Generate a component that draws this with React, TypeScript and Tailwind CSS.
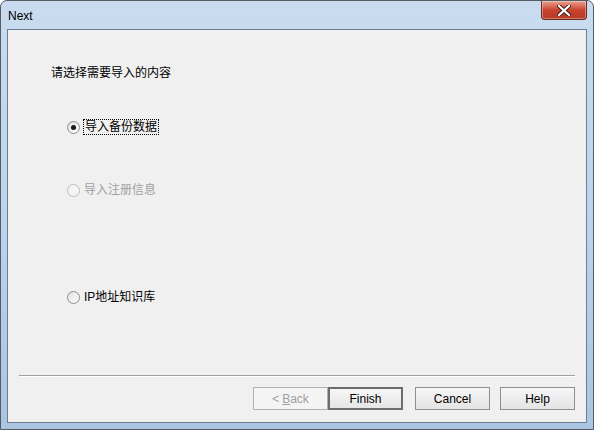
import React from 'react'

const font = { fontFamily: '"Liberation Sans", "Noto Sans CJK SC", sans-serif' }

function Radio({ checked, disabled }: { checked?: boolean; disabled?: boolean }) {
  return (
    <span
      className={
        'flex h-[13px] w-[13px] items-center justify-center rounded-full border ' +
        (disabled
          ? 'border-[#bcbcbc] bg-[#f4f4f4]'
          : 'border-[#8e8f8f] bg-gradient-to-br from-[#dcdcdc] to-[#ffffff]')
      }
    >
      <span
        className={
          'flex h-[9px] w-[9px] items-center justify-center rounded-full ' +
          (disabled ? 'bg-[#f4f4f4]' : 'bg-gradient-to-br from-[#e4e4e4] to-[#fbfbfb]')
        }
      >
        {checked && <span className="h-[5px] w-[5px] rounded-full bg-[#1a1a1a]" />}
      </span>
    </span>
  )
}

function Btn({
  children,
  isDefault,
  disabled,
}: {
  children: React.ReactNode
  isDefault?: boolean
  disabled?: boolean
}) {
  return (
    <div
      className={
        'flex h-[23px] w-[75px] items-center justify-center text-[12px] ' +
        (isDefault
          ? 'border-2 border-[#6d6d6d] bg-gradient-to-b from-[#f6f6f6] to-[#e6e6e6] text-black'
          : disabled
            ? 'border border-[#adb2b5] bg-[#f4f4f4] text-[#a0a0a0]'
            : 'border border-[#8f8f8f] bg-gradient-to-b from-[#f6f6f6] to-[#e4e4e4] text-black')
      }
    >
      {children}
    </div>
  )
}

export default function App() {
  return (
    <div
      className="h-[430px] w-[594px] overflow-hidden rounded-t-[7px] border border-[#555b63] bg-gradient-to-b from-[#c9dcef] via-[#bcd4ec] to-[#a9c5e2]"
      style={font}
    >
      {/* title bar */}
      <div className="flex h-[28px] items-start justify-between">
        <div className="pl-[7px] pt-[8px] text-[12px] leading-[14px] text-black">Next</div>
        <div className="mr-[6px] flex h-[19px] w-[46px] items-center justify-center rounded-b-[4px] border border-t-0 border-[#6b2a20] bg-gradient-to-b from-[#e8a090] via-[#c9432d] to-[#b33a26] shadow-[inset_0_0_0_1px_rgba(255,255,255,0.35)]">
          <svg width="14" height="11" viewBox="0 0 14 11">
            <path
              d="M2 1 L12 10 M12 1 L2 10"
              stroke="#3b1a14"
              strokeWidth="4"
              strokeLinecap="square"
            />
            <path
              d="M2 1 L12 10 M12 1 L2 10"
              stroke="#ffffff"
              strokeWidth="2.2"
              strokeLinecap="square"
            />
          </svg>
        </div>
      </div>

      {/* client area */}
      <div className="mx-[6px] h-[394px] border border-[#6f7f93] bg-[#f0f0f0]">
        <div className="pl-[43px] pt-[35px] text-[12px] leading-[16px] text-black">
          请选择需要导入的内容
        </div>

        <div className="pl-[59px]">
          <div className="mt-[38px] flex h-[16px] items-center gap-[3px] text-[12px]">
            <Radio checked />
            <span className="border border-dotted border-black px-[1px] leading-[14px] text-black">
              导入备份数据
            </span>
          </div>
          <div className="mt-[47px] flex h-[16px] items-center gap-[4px] text-[12px] text-[#a0a0a0]">
            <Radio disabled />
            <span>导入注册信息</span>
          </div>
          <div className="mt-[91px] flex h-[16px] items-center gap-[4px] text-[12px] text-black">
            <Radio />
            <span>IP地址知识库</span>
          </div>
        </div>

        <div className="ml-[11px] mt-[70px] w-[556px] border-t border-b border-t-[#a0a0a0] border-b-white" />

        <div className="mt-[10px] flex pl-[245px]">
          <Btn disabled>
            &lt; <span className="ml-[3px] underline">B</span>ack
          </Btn>
          <Btn isDefault>Finish</Btn>
          <div className="ml-[12px]">
            <Btn>Cancel</Btn>
          </div>
          <div className="ml-[10px]">
            <Btn>Help</Btn>
          </div>
        </div>
      </div>
    </div>
  )
}
